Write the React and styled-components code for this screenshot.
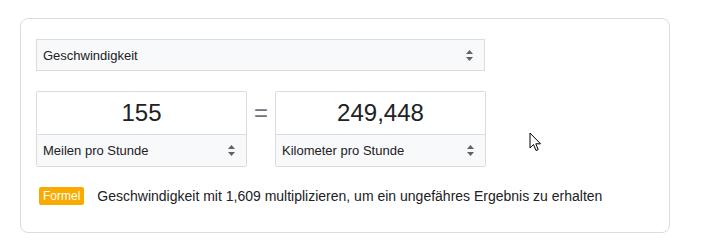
import React from "react";
import styled, { createGlobalStyle } from "styled-components";

const GlobalStyle = createGlobalStyle`
  body {
    margin: 0;
    background: #fff;
    font-family: "Liberation Sans", Arial, sans-serif;
    color: #202124;
  }
`;

const Page = styled.div`
  position: relative;
  width: 724px;
  height: 244px;
  overflow: hidden;
  padding: 18px 0 0 20px;
  box-sizing: border-box;
`;

const Card = styled.div`
  width: 650px;
  box-sizing: border-box;
  border: 1px solid #dadce0;
  border-radius: 8px;
  padding: 20px 15px 27px 15px;
`;

const Select = styled.div`
  display: flex;
  align-items: center;
  justify-content: space-between;
  box-sizing: border-box;
  width: ${(p) => p.width || "449px"};
  height: 32px;
  padding: 0 10px 0 6px;
  background: #f8f9fa;
  border: 1px solid #dadce0;
  border-radius: ${(p) => (p.flat ? "0 0 2px 2px" : "0")};
  border-width: ${(p) => (p.flat ? "1px 0 0 0" : "1px")};
  font-size: 13px;
  color: #202124;
`;

const Row = styled.div`
  display: flex;
  align-items: flex-start;
  margin-top: 20px;
`;

const UnitBox = styled.div`
  width: 211px;
  box-sizing: border-box;
  border: 1px solid #dadce0;
  border-radius: 2px;
  display: flex;
  flex-direction: column;
`;

const Value = styled.div`
  height: 42px;
  display: flex;
  align-items: center;
  justify-content: center;
  font-size: 24px;
  color: #202124;
`;

const Equals = styled.div`
  width: 28px;
  height: 44px;
  display: flex;
  align-items: center;
  justify-content: center;
  font-size: 24px;
  color: #70757a;
`;

const Formula = styled.div`
  display: flex;
  align-items: center;
  margin: 20px 0 0 3px;
  font-size: 14px;
  color: #202124;
`;

const Badge = styled.span`
  background: #f9ab00;
  color: #fff;
  font-size: 12px;
  padding: 2px 4px;
  border-radius: 2px;
  line-height: 14px;
  margin-right: 13px;
`;

const Footer = styled.div`
  display: flex;
  justify-content: space-between;
  width: 600px;
  margin: 9px 0 0 11px;
  font-size: 12px;
  color: #70757a;
`;

const Cursor = styled.svg`
  position: absolute;
  left: 529px;
  top: 132px;
`;

const Arrows = () => (
  <svg width="9" height="13" viewBox="0 0 9 13">
    <path d="M4.5 1 L8 5 L1 5 Z" fill="#5f6368" />
    <path d="M4.5 12 L8 8 L1 8 Z" fill="#5f6368" />
  </svg>
);

const Unit = ({ value, label }) => (
  <UnitBox>
    <Value>{value}</Value>
    <Select flat width="100%">
      {label}
      <Arrows />
    </Select>
  </UnitBox>
);

export default function App() {
  return (
    <Page>
      <GlobalStyle />
      <Card>
        <Select>
          Geschwindigkeit
          <Arrows />
        </Select>
        <Row>
          <Unit value="155" label="Meilen pro Stunde" />
          <Equals>=</Equals>
          <Unit value="249,448" label="Kilometer pro Stunde" />
        </Row>
        <Formula>
          <Badge>Formel</Badge>
          Geschwindigkeit mit 1,609 multiplizieren, um ein ungefähres Ergebnis zu erhalten
        </Formula>
      </Card>
      <Footer>
        <span>Weitere Informationen</span>
        <span>Feedback geben</span>
      </Footer>
      <Cursor width="13" height="20" viewBox="0 0 13 20">
        <path
          d="M1 1 L1 16 L4.5 12.5 L7 18.5 L9.2 17.6 L6.8 11.8 L11.5 11.8 Z"
          fill="#fff"
          stroke="#000"
          strokeWidth="1"
          strokeLinejoin="miter"
        />
      </Cursor>
    </Page>
  );
}
